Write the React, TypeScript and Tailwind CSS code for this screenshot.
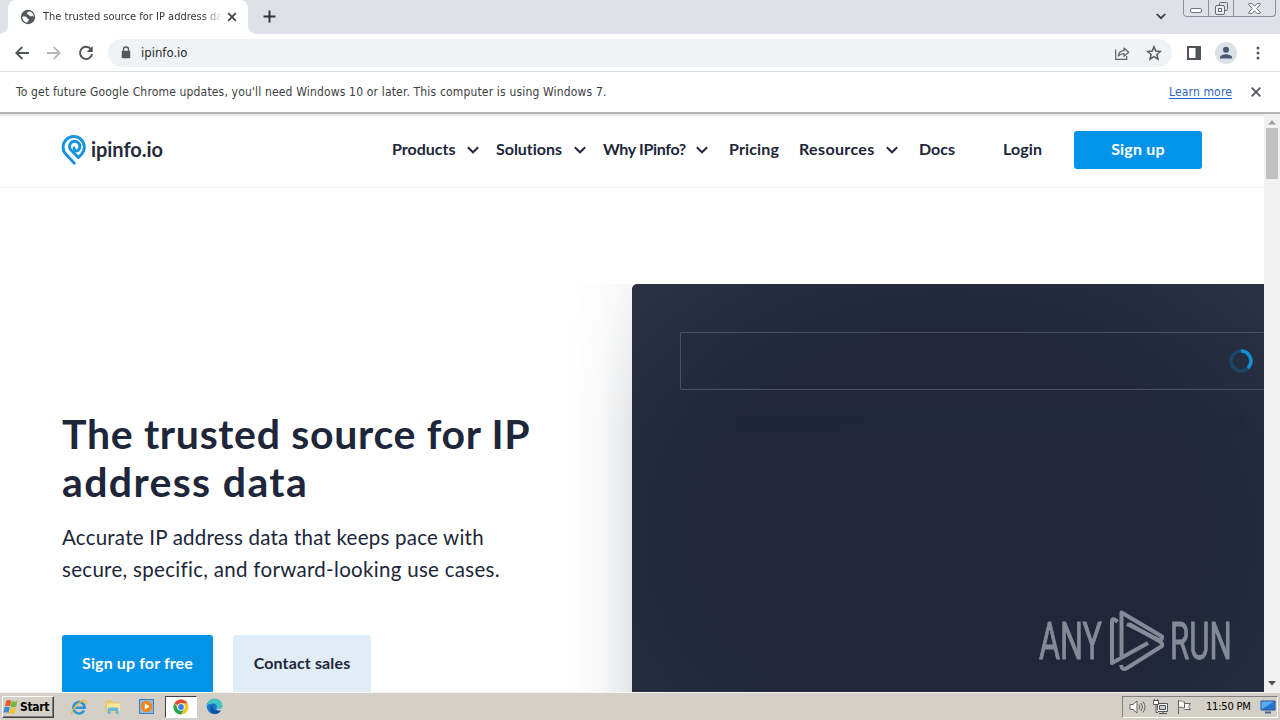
import React from "react";
import { clsx } from "clsx";

const tahoma = "font-['DejaVu_Sans_Condensed','DejaVu_Sans',sans-serif] [font-stretch:condensed]";

const navItems = [
	{ label: "Products", menu: true, className: "w-[104px]", text: "w-[64px]" },
	{ label: "Solutions", menu: true, className: "w-[107px]", text: "w-[67px] tracking-[-0.030px]" },
	{ label: "Why IPinfo?", menu: true, className: "w-[126px]", text: "w-[82px] tracking-[-0.340px]" },
	{ label: "Pricing", menu: false, className: "w-[70px]", text: "tracking-[0.150px]" },
	{ label: "Resources", menu: true, className: "w-[120px]", text: "w-[76px] tracking-[0.360px]" },
	{ label: "Docs", menu: false, className: "w-[84px]", text: "" },
	{ label: "Login", menu: false, className: "w-[71px]", text: "tracking-[0.100px]" },
];

const Chevron = () => (
	<svg width="12" height="8" viewBox="0 0 12 8" fill="none" className="shrink-0">
		<path d="M.8 1.200 6 6.300l5.200-5.100" stroke="#262b3b" strokeWidth="2" />
	</svg>
);

const TabStrip = () => (
	<div className="flex h-[34px] bg-[#dee1e8]">
		<div className="relative ml-2 flex h-[34px] w-[240px] items-center rounded-t-lg bg-white pl-3">
			<span className="absolute -left-2 bottom-0 size-2 bg-[radial-gradient(circle_at_0_0,#dee1e8_7.5px,white_8px)]" />
			<span className="absolute -right-2 bottom-0 size-2 bg-[radial-gradient(circle_at_100%_0,#dee1e8_7.5px,white_8px)]" />
			<svg width="16" height="16" viewBox="0 0 16 16" className="shrink-0">
				<circle cx="8" cy="8" r="7.2" fill="#54585d" />
				<path d="M2.300 7.800c2.200-.7 4.200-.2 4.600 1 .4 1.200 2.100.7 2 2-.1 1.100-1.300 1.300-1.700 2.900C4.400 13.400 2.200 11 2.300 7.800zM9 2.400c-1.200.8-2.400 1.200-2 2.300.4 1 1.500.4 2 1.400.4.900 1.600 1.500 2.600 1.100 1-.3 1.500.1 2.100.7.200-2.800-1.700-5.200-4.700-5.500z" fill="#fff" />
			</svg>
			<span className={clsx(tahoma, "ml-[7px] w-[177px] overflow-hidden whitespace-nowrap text-[11px] text-[#33373b] [mask-image:linear-gradient(to_right,black_160px,transparent_180px)]")}>
				The trusted source for IP address data
			</span>
			<svg width="10" height="10" viewBox="0 0 10 10" className="ml-[7px] shrink-0">
				<path d="m1.200 1.200 7.600 7.600M8.800 1.200 1.200 8.800" stroke="#3c4043" strokeWidth="1.700" />
			</svg>
		</div>
		<svg width="13" height="13" viewBox="0 0 13 13" className="ml-[15px] mt-[10px]">
			<path d="M6.500.5v12M.5 6.500h12" stroke="#33373c" strokeWidth="2" />
		</svg>
		<svg width="10" height="7" viewBox="0 0 10 7" fill="none" className="ml-auto mr-[17px] mt-[13px]">
			<path d="m.8 1 4.200 4.200L9.200 1" stroke="#33373c" strokeWidth="1.700" />
		</svg>
		<div className="mr-1 flex h-[17px] w-[93px] rounded-b-[4px] border border-t-0 border-[#8b9099]">
			<div className="flex w-[25px] justify-center border-r border-[#8b9099] pt-2">
				<span className="h-[5px] w-3 rounded-[2px] border border-[#70757d] bg-white" />
			</div>
			<div className="flex w-[25px] justify-center border-r border-[#8b9099] pt-0.5">
				<svg width="13" height="13" viewBox="0 0 13 13" fill="none" stroke="#656a72">
					<path d="M4.500 3.500v-2q0-1 1-1h6q1 0 1 1v6q0 1-1 1h-2" />
					<rect x=".5" y="3.500" width="9" height="9" rx="1.500" fill="#eef0f4" />
					<rect x="3.500" y="6.500" width="3" height="3" fill="#fff" />
				</svg>
			</div>
			<div className="flex flex-1 justify-center pt-[3px]">
				<svg width="13" height="11" viewBox="0 0 13 11">
					<path d="M.8.6h3.400l2.300 2.700L8.800.6h3.400v1.200L8.600 5.500l3.600 3.700v1.200H8.800L6.500 7.700l-2.300 2.700H.8V9.200l3.600-3.700L.8 1.800z" fill="#f8f9fa" stroke="#70757d" />
				</svg>
			</div>
		</div>
	</div>
);

const Toolbar = () => (
	<div className="flex h-[38px] items-center border-b border-[#dcdee1] bg-white pl-[15px] pr-[20px]">
		<svg width="14" height="14" viewBox="0 0 14 14" fill="none" stroke="#50545a" strokeWidth="1.800">
			<path d="M14 7H1.500M7.300 1 1.300 7l6 6" />
		</svg>
		<svg width="14" height="14" viewBox="0 0 14 14" fill="none" stroke="#b5b7ba" strokeWidth="1.800" className="ml-[18px]">
			<path d="M0 7h12.500M6.700 1l6 6-6 6" />
		</svg>
		<svg width="16" height="16" viewBox="0 0 16 16" fill="none" className="ml-[17px]">
			<path d="M13.200 4.500A6.100 6.100 0 1 0 14.100 9" stroke="#50545a" strokeWidth="1.900" />
			<path d="M14.700 1v6H8.700z" fill="#50545a" />
		</svg>
		<div className="ml-[14px] flex h-7 w-[1064px] items-center rounded-full bg-[#f0f3f5] pl-[13px] pr-[10px]">
			<svg width="10" height="13" viewBox="0 0 10 13" fill="none" className="-mt-px">
				<path d="M2.500 6V3.500a2.500 2.500 0 0 1 5 0V6" stroke="#54585d" strokeWidth="1.300" />
				<rect x=".7" y="4.800" width="8.600" height="7.500" rx="1" fill="#54585d" />
			</svg>
			<span className={clsx(tahoma, "ml-[10px] text-[13px] text-[#24272b]")}>ipinfo.io</span>
			<svg width="16" height="16" viewBox="0 0 16 16" fill="none" stroke="#5f6368" strokeWidth="1.200" className="ml-auto">
				<path d="M1.700 4.500v9.800h11V11" />
				<path d="M4.300 11c.4-3.600 2.500-5.200 5.700-5.300V3l4.700 4.200L10 11.300V8.600C7.500 8.600 5.700 9.300 4.300 11z" strokeLinejoin="round" />
			</svg>
			<svg width="16" height="16" viewBox="0 0 16 16" fill="none" stroke="#54585d" strokeWidth="1.500" className="ml-4">
				<path d="m8 1.800 1.800 4.300 4.600.4-3.500 3 1.100 4.600L8 11.700l-4 2.400 1.100-4.600-3.500-3 4.600-.4z" />
			</svg>
		</div>
		<svg width="14" height="14" viewBox="0 0 14 14" className="ml-[15px]">
			<path d="M0 0h14v14H0zM2 2v10h6.500V2z" fill="#50545a" fillRule="evenodd" />
		</svg>
		<svg width="22" height="22" viewBox="0 0 22 22" className="ml-[14px]">
			<circle cx="11" cy="11" r="11" fill="#dce1e8" />
			<circle cx="11" cy="7.800" r="3" fill="#4b5876" />
			<path d="M5 16.500v-1.300c0-2 4-3 6-3s6 1 6 3v1.300z" fill="#4b5876" />
		</svg>
		<svg width="4" height="14" viewBox="0 0 4 14" fill="#50545a" className="ml-auto">
			<circle cx="2" cy="2" r="1.500" />
			<circle cx="2" cy="7" r="1.500" />
			<circle cx="2" cy="12" r="1.500" />
		</svg>
	</div>
);

const InfoBar = () => (
	<div className={clsx(tahoma, "flex h-10 items-center bg-white pl-4 pr-[19px] text-[12px] text-[#3c4043]")}>
		<span className="whitespace-nowrap tracking-[0.165px]">
			To get future Google Chrome updates, you'll need Windows 10 or later. This computer is using Windows 7.
		</span>
		<span className="ml-auto mr-[19px] whitespace-nowrap tracking-[0.150px] text-[#2c65bd] underline underline-offset-2">
			Learn more
		</span>
		<svg width="10" height="10" viewBox="0 0 10 10">
			<path d="m.7.7 8.600 8.600M9.300.7.7 9.300" stroke="#54585d" strokeWidth="1.800" />
		</svg>
	</div>
);

const SiteHeader = () => (
	<header className="flex h-[74px] shrink-0 items-center border-b border-[#f0f0f2] pb-px pl-[61px]">
		<svg width="26" height="32" viewBox="0 0 26 32" fill="none" stroke="#1593df" strokeWidth="2.900" strokeLinecap="round" strokeLinejoin="round">
			<path d="M13.300 29.200 5.200 20.600A10.600 10.600 0 1 1 20.600 20.200l-3.300 3.300-6.300-6.600A5.200 5.200 0 1 1 17.300 16.200c-1.600 1.400-4.200.4-4.300-2.200" />
		</svg>
		<span className="ml-[4px] w-[301px] pb-[3px] font-[Lato,sans-serif] text-[20px] font-bold leading-6 tracking-[-0.050px] text-[#262b3b]">
			ipinfo.io
		</span>
		<nav className="flex items-center font-[Lato,sans-serif] text-[16px] font-bold text-[#20263a] [font-variant-ligatures:none]">
			{navItems.map((item) => (
				<div key={item.label} className={clsx("flex items-center whitespace-nowrap", item.className)}>
					<span className={clsx("mr-[11px] shrink-0 pb-0.5", item.text)}>{item.label}</span>
					{item.menu && <Chevron />}
				</div>
			))}
		</nav>
		<button className="h-[38px] w-32 rounded-[3px] bg-[#0394e7] pb-0.5 font-[Lato,sans-serif] text-[16px] font-bold tracking-[0.200px] text-white">
			Sign up
		</button>
	</header>
);

const Hero = () => (
	<main className="flex flex-1 pt-24">
		<div className="w-[632px] shrink-0 pl-[62px] pt-[126px] font-[Lato,sans-serif] text-[#20263a]">
			<h1 className="whitespace-nowrap text-[41px] font-bold leading-[48px]">
				<span className="block tracking-[0.680px]">The trusted source for IP</span>
				<span className="block tracking-[1.360px]">address data</span>
			</h1>
			<p className="mt-[15px] whitespace-nowrap text-[20.500px] leading-8">
				<span className="block tracking-[0.230px]">Accurate IP address data that keeps pace with</span>
				<span className="block tracking-[0.300px]">secure, specific, and forward-looking use cases.</span>
			</p>
			<div className="mt-[50px] flex gap-5 text-[16px] font-bold">
				<button className="h-[58px] w-[151px] rounded-[3px] bg-[#0394e7] pb-0.5 tracking-[0.120px] text-white">Sign up for free</button>
				<button className="h-[58px] w-[138px] rounded-[3px] bg-[#e0edf7] pb-0.5 tracking-[0.140px]">Contact sales</button>
			</div>
		</div>
		<div className="relative w-[632px] rounded-tl-[5px] bg-[#21263a] bg-[radial-gradient(ellipse_390px_310px_at_318px_250px,#21263a_65%,#2c3347_120%)] pl-12 pt-12">
			<div className="absolute -left-[60px] top-0 h-full w-[60px] bg-[linear-gradient(to_left,rgba(45,55,70,0.13),rgba(45,55,70,0.04)_50%,transparent)] [mask-image:linear-gradient(to_bottom,rgba(0,0,0,0.35),black_140px)]" />
			<div className="flex h-[58px] items-center justify-end rounded-l-[2px] border border-r-0 border-[#4b5065] pr-[11px]">
				<svg width="24" height="24" viewBox="0 0 24 24" fill="none" strokeWidth="3.500">
					<circle cx="12" cy="12" r="10" stroke="#1d4664" />
					<path d="M12 2a10 10 0 0 1 7 17" stroke="#138fd6" />
				</svg>
			</div>
			<div className="mt-[25px] h-[15px] w-[566px] bg-gradient-to-r from-transparent via-[#1f273b] to-[#20293d]" />
		</div>
	</main>
);

const ScrollBar = () => (
	<div className="flex w-4 flex-col items-center bg-[#f0f0f0]">
		<svg width="8" height="5" viewBox="0 0 8 5" className="mt-[6px]">
			<path d="M4 0 8 4.500H0z" fill="#9c9c9c" />
		</svg>
		<div className="mt-[3px] h-[51px] w-3 bg-[#c0c0c0]" />
		<svg width="8" height="5" viewBox="0 0 8 5" className="mb-[6px] mt-auto">
			<path d="M0 0h8L4 4.500z" fill="#4b4b4b" />
		</svg>
	</div>
);

const Watermark = () => (
	<div className="absolute left-[1039px] top-[608px] flex h-16 w-[196px] items-center font-[Roboto,sans-serif] text-[52px] leading-none text-[#858a98] [-webkit-text-stroke:1px_#858a98]">
		<span className="w-[70px] origin-left scale-x-[0.62] whitespace-nowrap pt-[3px]">ANY</span>
		<svg width="56" height="64" viewBox="0 0 56 64" fill="none" stroke="#858a98" strokeWidth="4" strokeLinejoin="round" className="shrink-0">
			<path d="M8.500 14Q3 8.500 3 14v41L39 35" />
			<path d="M12.500 48V4.500l40.500 24q1 3-3 3.500L18 16" />
			<path d="M12 57q1 6 6 3L53 38q1-3-3-5L20 16" />
		</svg>
		<span className="ml-[5px] origin-left scale-x-[0.6] whitespace-nowrap pt-[3px]">RUN</span>
	</div>
);

const Taskbar = () => (
	<footer className="flex h-[28px] items-center border-t border-[#f5f3ed] bg-[#d4d0c8] pl-0.5">
		<button className="flex h-[22px] w-[52px] items-center gap-px border border-b-[#404040] border-l-white border-r-[#404040] border-t-white shadow-[inset_-1px_-1px_0_#808080]">
			<svg width="16" height="16" viewBox="0 0 16 16" className="shrink-0">
				<path d="M3.400 1.600c1.900-.9 3.600-.6 4.900.1L7.200 7.300C5.800 6.500 4 6.500 2 7.100z" fill="#e65a28" />
				<path d="M8.900 2.100c1.900.8 3.700.8 5.700 0l-1.500 5.700c-1.700.8-3.600.7-5.500-.1z" fill="#76b83f" />
				<path d="M1.700 8.100c1.900-.7 3.500-.5 5.200.2l-1.400 5.600c-1.700-.8-3.400-.8-5.200-.1z" fill="#3d8bd3" />
				<path d="M7.500 8.700c1.900.8 3.500.8 5.400.1l-1.400 5.600c-1.900.7-3.500.6-5.400-.1z" fill="#f6c12d" />
			</svg>
			<span className={clsx(tahoma, "text-[12px] font-bold tracking-[-0.300px] text-black")}>Start</span>
		</button>
		<svg width="18" height="18" viewBox="0 0 18 18" fill="none" className="ml-[16px]">
			<path d="M14 12.500A5.700 5.700 0 1 1 14.700 9.700H5.500" stroke="#2d94d8" strokeWidth="2.600" />
			<path d="M2.500 16.200c-4-2 8.500-15 13-13.600 1.300.4 1 2 .1 3.600" stroke="#efb936" strokeWidth="1.400" />
		</svg>
		<svg width="18" height="18" viewBox="0 0 18 18" className="ml-4">
			<path d="M1.500 2.500h6l1.500 2h6.500v10h-14z" fill="#e8c565" />
			<path d="M3 5.500h13v8H3z" fill="#f8e69d" />
			<path d="M3.500 16v-4.500q0-2 2-2h7q2 0 2 2V16h-3v-3h-5v3z" fill="#69b8dd" />
		</svg>
		<svg width="18" height="18" viewBox="0 0 18 18" className="ml-4">
			<rect x="1.500" y="1.500" width="14" height="14" fill="#8eb9e4" stroke="#437cba" />
			<circle cx="8.500" cy="8.500" r="5.800" fill="#ee861b" />
			<path d="m6.800 5.200 4.800 3.300-4.800 3.300z" fill="#fff" />
		</svg>
		<div className="ml-[9px] flex h-[22px] w-[32px] items-center justify-center border border-b-white border-l-[#404040] border-r-white border-t-[#404040] bg-white pr-px">
			<svg width="16" height="16" viewBox="0 0 16 16">
				<circle cx="8" cy="8" r="7.500" fill="#f9c523" />
				<path d="M8 8 1.500 4.250A7.500 7.500 0 0 1 14.500 4.250H8z" fill="#dd4b39" />
				<path d="M1.500 4.250A7.500 7.500 0 0 0 8 15.500L11.200 9.900 8 8 4.700 9.900z" fill="#25a35a" />
				<circle cx="8" cy="8" r="3.800" fill="#fff" />
				<circle cx="8" cy="8" r="2.900" fill="#3f83e8" />
			</svg>
		</div>
		<svg width="17" height="17" viewBox="0 0 17 17" className="ml-[9px]">
			<circle cx="8.500" cy="8.500" r="7.800" fill="#1877c8" />
			<path d="M1 7.500C2 2.500 6 .7 9.500.8c4.500.2 7 3.800 6.700 7.100-.3 2.600-3.500 3.700-6 2.600 1.800-2.700-.2-5-3.200-5-2.600 0-4.500.7-6 2z" fill="#43c6c1" />
			<path d="M7 6.500c-2 3.500 1 7 7.500 6.500-3 4.200-11 3.300-10-2.500.3-2 1.200-3.300 2.500-4z" fill="#124f9c" />
			<path d="M10.200 10.500c2.300 1 5 .4 6-1.800l.8 3.300-3.500.5c-2 0-3.300-.8-3.300-2z" fill="#d4d0c8" />
		</svg>
		<div className="ml-auto mr-0.5 flex h-[22px] w-[156px] items-center border border-b-white border-l-[#808080] border-r-white border-t-[#808080] pl-[6px]">
			<svg width="17" height="16" viewBox="0 0 17 16" fill="none" stroke="#676767">
				<path d="M1 5.500h3L8 2v12l-4-3.500H1z" fill="#fff" />
				<path d="M10 5.500q1.500 2.500 0 5M12 4q3 4 0 8M14 2.500q4 5.500 0 11" />
			</svg>
			<svg width="17" height="16" viewBox="0 0 17 16" fill="none" stroke="#555" className="ml-[6px]">
				<path d="M5.500 4.500h10v8h-10zM7 14.500h8M11 12.500v2" fill="#f4f4f4" />
				<path d="M7.500 6.500h6v4h-6z" fill="#ccc" />
				<path d="M1.500 1.500h5v4h-5zM4 6v7.500h2M2.500 0v1.500m3-1.500v1.500" fill="#fff" />
			</svg>
			<svg width="16" height="16" viewBox="0 0 16 16" fill="#fff" stroke="#666" className="ml-[7px]">
				<path d="M2.500 1v14M2.500 2.500c3-2 4 1 6 .5v6c-2 .5-3-2-6-.5M8.500 4.500h6l-2 3 2 3h-6" />
			</svg>
			<span className={clsx(tahoma, "ml-[14px] whitespace-nowrap pt-0.5 text-[11px] tracking-[-0.200px] text-black")}>11:50 PM</span>
			<svg width="16" height="14" viewBox="0 0 16 14" className="ml-auto mr-px">
				<path d="M1 1h14v9H1z" fill="#2377cf" stroke="#225195" />
				<path d="M1.500 9.500 14 1.500H1.500z" fill="#5caaf0" />
				<path d="M5 12.500h6" stroke="#496c91" strokeWidth="2" />
			</svg>
		</div>
	</footer>
);

export default function App() {
	return (
		<div className="relative flex h-[720px] w-[1280px] flex-col overflow-hidden bg-white">
			<TabStrip />
			<Toolbar />
			<InfoBar />
			<div className="flex h-[580px] shrink-0 border-t-2 border-[#b4b4b4]">
				<div className="flex w-[1264px] flex-col overflow-hidden bg-white shadow-[inset_0_3px_2px_-1px_#e4e4e4]">
					<SiteHeader />
					<Hero />
				</div>
				<ScrollBar />
			</div>
			<Taskbar />
			<Watermark />
		</div>
	);
}
